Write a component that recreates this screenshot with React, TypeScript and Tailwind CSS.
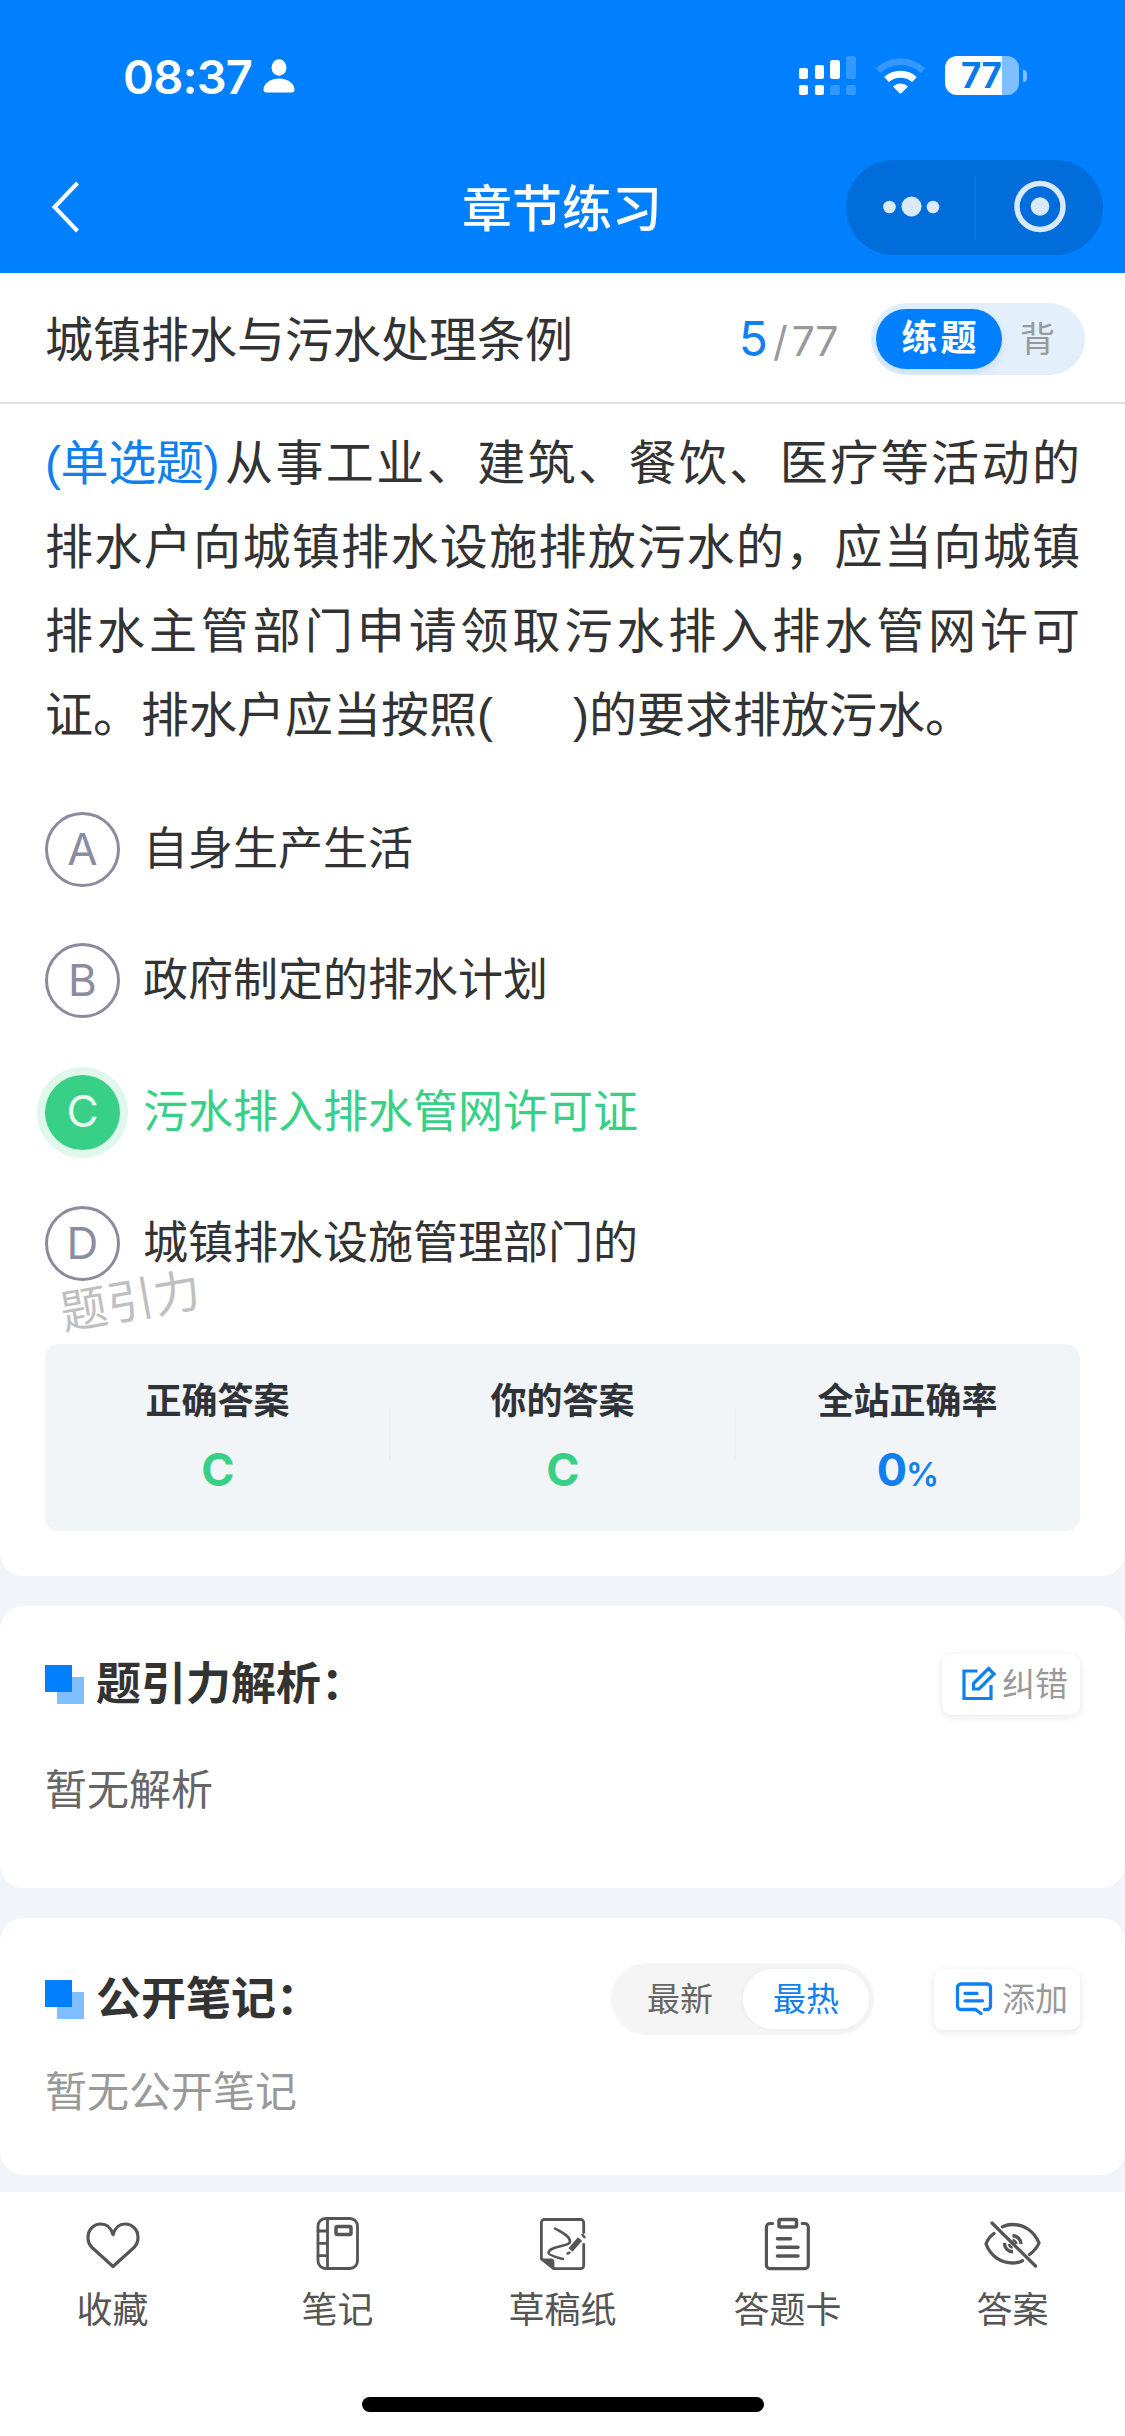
import type { ReactNode } from "react";

const options = [
  { key: "A", text: "自身生产生活", correct: false },
  { key: "B", text: "政府制定的排水计划", correct: false },
  { key: "C", text: "污水排入排水管网许可证", correct: true },
  { key: "D", text: "城镇排水设施管理部门的", correct: false },
];

function StatusBar() {
  return (
    <div className="flex h-[152px] items-start justify-between pl-[123px] pr-[98px] text-white">
      <div className="mt-[48px] flex h-[56px] items-center">
        <span className="font-['Inter'] text-[47px] font-semibold leading-none tracking-[-0.8px]">08:37</span>
        <svg className="ml-[11px]" width="32" height="34" viewBox="0 0 32 34" fill="currentColor">
          <ellipse cx="16" cy="8.5" rx="7.5" ry="8.2" />
          <path d="M16 19.5c9 0 15.5 5.500 15.500 11 0 2-1 3-3 3h-25c-2 0-3-1-3-3 0-5.500 6.500-11 15.500-11z" />
        </svg>
      </div>
      <div className="mt-[56px] flex items-start">
        <svg width="58" height="40" viewBox="0 0 58 40" fill="currentColor">
          <rect x="0" y="12" width="9" height="11" rx="2" />
          <rect x="16" y="9" width="9" height="14" rx="2" />
          <rect x="31" y="4" width="10" height="19" rx="2.500" />
          <rect x="47" y="0" width="10" height="23" rx="2.500" opacity="0.2" />
          <rect x="0" y="29" width="9" height="10" rx="2" />
          <rect x="16" y="29" width="9" height="10" rx="2" />
          <rect x="31" y="29" width="10" height="10" rx="2.500" opacity="0.2" />
          <rect x="47" y="29" width="10" height="10" rx="2.500" opacity="0.2" />
        </svg>
        <svg className="ml-[18px]" width="52" height="40" viewBox="0 0 52 40" fill="none">
          <path d="M3 14.500a33 33 0 0 1 45 0" stroke="white" strokeWidth="6.500" opacity="0.2" />
          <path d="M11.500 23.500a21 21 0 0 1 28 0" stroke="white" strokeWidth="7" />
          <path d="M18 30.500a11 11 0 0 1 15 0l-6.200 6.300a2 2 0 0 1-2.700 0z" fill="white" />
        </svg>
        <div className="ml-[18px] flex items-center">
          <div className="flex h-[39px] w-[74px] items-center overflow-hidden rounded-[12px] bg-[linear-gradient(90deg,#fff_57px,#80bfff_57px)] pl-[16px]">
            <span className="font-['Inter'] text-[35px] font-bold leading-none tracking-[-0.6px] text-[#0a7ae8]">77</span>
          </div>
          <div className="ml-[4px] h-[12px] w-[4px] rounded-r-full bg-[#80bfff]" />
        </div>
      </div>
    </div>
  );
}

function NavBar() {
  return (
    <div className="flex h-[121px] items-start text-white">
      <div className="w-[460px] pl-[50px] pt-[28px]">
        <svg width="32" height="54" viewBox="0 0 32 54" fill="none" stroke="currentColor" strokeWidth="4">
          <path d="M27.500 3 4.500 27l23 24" />
        </svg>
      </div>
      <h1 className="w-[204px] whitespace-nowrap pt-[18px] text-center text-[50px] font-medium leading-[80px]">章节练习</h1>
      <div className="ml-[182px] mt-[8px] flex h-[95px] w-[257px] items-center rounded-full bg-[#006ddb] text-[#d9e9fa]">
        <svg width="257" height="95" viewBox="0 0 257 95" fill="currentColor">
          <circle cx="43.500" cy="47" r="6.300" />
          <circle cx="65.500" cy="46.500" r="10" />
          <circle cx="87" cy="47" r="6.300" />
          <path d="M129 16v64" stroke="#1077e0" strokeWidth="1.500" />
          <circle cx="194" cy="46.500" r="23" fill="none" stroke="currentColor" strokeWidth="5.500" />
          <circle cx="194" cy="46.500" r="9.300" />
        </svg>
      </div>
    </div>
  );
}

function ChapterBar() {
  return (
    <div className="flex h-[131px] items-start justify-between border-b-2 border-[#dfdfdf] bg-white pl-[45px] pr-[40px]">
      <h2 className="mt-[28px] text-[48px] leading-[80px] text-[#333]">城镇排水与污水处理条例</h2>
      <div className="flex">
        <div className="mt-[26px] flex items-baseline font-['Inter'] text-[41px] leading-[80px] text-[#999]">
          <span className="text-[48px] text-[#0f80ee]">5</span>
          <span className="ml-[5px]">/</span>
          <span className="ml-[4px] tracking-[-0.5px]">77</span>
        </div>
        <div className="ml-[33px] mt-[30px] flex h-[72px] w-[214px] items-center rounded-full bg-[#e3f0fc] pl-[5px]">
          <div className="flex h-[60px] w-[126px] items-center justify-center rounded-full bg-[#0080ff] pl-[3px] text-[36px] font-bold tracking-[3px] text-white shadow-[0_3px_8px_rgba(0,70,140,0.12)]">
            练题
          </div>
          <span className="ml-[18px] text-[35px] leading-none text-[#999]">背</span>
        </div>
      </div>
    </div>
  );
}

function Question() {
  return (
    <div className="mt-[17px] px-[45px] text-[48px] leading-[84px] text-[#333]">
      <div className="flex whitespace-nowrap">
        <span className="mr-[6px] tracking-[-0.4px] text-[#0f80ee]">(单选题)</span>
        <span className="flex-1 [text-align-last:justify]">从事工业、建筑、餐饮、医疗等活动的</span>
      </div>
      <p className="whitespace-nowrap [text-align-last:justify]">排水户向城镇排水设施排放污水的，应当向城镇</p>
      <p className="whitespace-nowrap [text-align-last:justify]">排水主管部门申请领取污水排入排水管网许可</p>
      <p className="whitespace-nowrap">
        证。排水户应当按照(<span className="inline-block w-[80px]" />)的要求排放污水。
      </p>
    </div>
  );
}

function Options() {
  return (
    <ul className="mt-[54px] flex flex-col gap-[56.4px] px-[45px]">
      {options.map((o) => (
        <li key={o.key} className="flex h-[75px] items-center">
          <span
            className={`flex h-[75px] w-[75px] items-center justify-center rounded-full pb-[2px] font-['Inter'] text-[44px] leading-none ${
              o.correct
                ? "bg-[#38d086] text-[#e6faf0] shadow-[0_0_0_8px_#e0f7ec]"
                : "border-[3px] border-[#8c8a9c] text-[#8c8ca0]"
            }`}
          >
            {o.key}
          </span>
          <span className={`ml-[23px] text-[45px] leading-[75px] ${o.correct ? "text-[#38d086]" : "text-[#333]"}`}>
            {o.text}
          </span>
        </li>
      ))}
    </ul>
  );
}

function Result() {
  return (
    <div className="mx-[45px] mt-[63px] flex h-[187px] items-start rounded-[14px] bg-[#f2f5f8] pt-[64px]">
      <ResultColumn label="正确答案">
        <span className="text-[#38d086]">C</span>
      </ResultColumn>
      <div className="-mx-px h-[52px] w-[2px] bg-[#edf0f3]" />
      <ResultColumn label="你的答案">
        <span className="text-[#38d086]">C</span>
      </ResultColumn>
      <div className="-mx-px h-[52px] w-[2px] bg-[#edf0f3]" />
      <ResultColumn label="全站正确率">
        <span className="text-[#0f80ee]">0</span>
        <span className="text-[33px] font-semibold text-[#0f80ee]">%</span>
      </ResultColumn>
    </div>
  );
}

function ResultColumn({ label, children }: { label: string; children: ReactNode }) {
  return (
    <div className="-mt-[34px] flex-1 text-center">
      <div className="text-[36px] font-bold leading-[56px] text-[#2f3337]">{label}</div>
      <div className="mt-[10px] font-['Inter'] text-[45px] font-bold leading-[60px] tracking-[-1px]">{children}</div>
    </div>
  );
}

function SectionTitle({ children }: { children: ReactNode }) {
  return (
    <div className="flex items-center">
      <svg width="39" height="39" viewBox="0 0 39 39">
        <rect x="12" y="12" width="27" height="27" fill="#80bfff" />
        <rect width="27" height="27" fill="#0080ff" />
      </svg>
      <h3 className="ml-[12px] pt-[2px] text-[45px] font-bold leading-[58px] text-[#333]">{children}</h3>
    </div>
  );
}

function EditIcon() {
  return (
    <svg width="36" height="36" viewBox="0 0 36 36" fill="none" stroke="#0f80ee" strokeWidth="3.200">
      <path d="M16.500 5H3v27.500h27V19" />
      <path d="M27.500 2.500 33 8 18 23h-5.500v-5.500z" />
    </svg>
  );
}

function NoteIcon() {
  return (
    <svg width="38" height="36" viewBox="0 0 38 36" fill="none" stroke="#0f80ee" strokeWidth="3.300" strokeLinecap="round">
      <path d="m26 32.500-5.500-4H6A3.500 3.500 0 0 1 2.500 25V6.500A3.500 3.500 0 0 1 6 3h26a3.500 3.500 0 0 1 3.500 3.500V25a3.500 3.500 0 0 1-3.500 3.500h-2.500" />
      <path d="M10 12.300h12M10 19.800h17.500" />
    </svg>
  );
}

function Analysis() {
  return (
    <section className="mt-[30px] h-[282px] rounded-[24px] bg-white px-[45px] pt-[48px]">
      <div className="flex h-[60px] items-center justify-between">
        <SectionTitle>题引力解析：</SectionTitle>
        <button className="flex h-[61px] w-[138px] items-center rounded-[10px] bg-white pl-[19px] text-[33px] text-[#999] shadow-[0_2px_9px_rgba(0,0,0,0.1)]">
          <EditIcon />
          <span className="ml-[5px] whitespace-nowrap leading-none">纠错</span>
        </button>
      </div>
      <p className="mt-[45px] text-[42px] leading-[64px] text-[#666]">暂无解析</p>
    </section>
  );
}

function PublicNotes() {
  return (
    <section className="mt-[30px] h-[257px] rounded-[24px] bg-white px-[45px] pt-[45px]">
      <div className="flex h-[72px] items-center justify-between">
        <SectionTitle>公开笔记：</SectionTitle>
        <div className="flex items-center">
          <div className="flex h-[72px] w-[263px] items-center rounded-full bg-[#f5f5f5] pl-[6px] text-[33px] leading-none">
            <span className="flex h-[60px] w-[126px] items-center justify-center text-[#666]">最新</span>
            <span className="flex h-[60px] w-[126px] items-center justify-center rounded-full bg-white text-[#0f80ee] shadow-[0_0_6px_rgba(0,0,0,0.04)]">
              最热
            </span>
          </div>
          <button className="ml-[60px] flex h-[61px] w-[146px] items-center rounded-[10px] bg-white pl-[21px] text-[33px] text-[#999] shadow-[0_2px_9px_rgba(0,0,0,0.1)]">
            <NoteIcon />
            <span className="ml-[9px] whitespace-nowrap leading-none">添加</span>
          </button>
        </div>
      </div>
      <p className="mt-[26px] text-[42px] leading-[64px] text-[#999]">暂无公开笔记</p>
    </section>
  );
}

const tabs = [
  {
    label: "收藏",
    icon: (
      <path
        strokeWidth="3.200"
        d="M30 21.500C28 15 23.500 11 18 11 10.500 11 5 17 5 24.500c0 4 1.500 7.500 4 10l21 19 21-19c2.500-2.500 4-6 4-10C55 17 49.500 11 42 11c-5.500 0-10 4-12 10.500z"
      />
    ),
  },
  {
    label: "笔记",
    icon: (
      <>
        <rect x="10" y="5.500" width="39.500" height="50" rx="7.500" />
        <path d="M19.500 5.500v50M10 18h9.500M10 30.300h9.500M10 42.700h9.500" />
        <rect x="28" y="13.500" width="15" height="8" rx="1.500" strokeWidth="3.500" />
      </>
    ),
  },
  {
    label: "草稿纸",
    icon: (
      <>
        <path d="M50.700 19.500V9.500a3 3 0 0 0-3-3H11.400a3 3 0 0 0-3 3V46l12.300 9.700h27a3 3 0 0 0 3-3V31.500" />
        <path d="M8.400 46h10a2.500 2.500 0 0 1 2.500 2.500v7.200z" fill="currentColor" strokeWidth="1" />
        <path d="M22 15.500c7 4 15 7.500 15 13 0 5.500-21.500 4-21.500 11.500 0 2 7 4 14.500 6" strokeWidth="2.500" />
        <path d="m37.500 37 9.500-11" strokeWidth="5.500" strokeLinecap="butt" />
        <path d="m49.500 21.800 2 2.400M34.500 40.500l2-.8" strokeWidth="2.500" />
      </>
    ),
  },
  {
    label: "答题卡",
    icon: (
      <>
        <path strokeWidth="3.200" d="M14.500 10.500h-2.600a3.500 3.500 0 0 0-3.500 3.500v38.200a3.500 3.500 0 0 0 3.500 3.500h34.900a3.500 3.500 0 0 0 3.500-3.500V14a3.500 3.500 0 0 0-3.500-3.500h-2.600" />
        <rect x="21" y="6.500" width="17.500" height="7.500" rx="1.500" strokeWidth="3.500" />
        <path strokeWidth="3.500" d="M19.500 25.700h13M19.500 34.300H40M19.500 43H40" />
      </>
    ),
  },
  {
    label: "答案",
    icon: (
      <>
        <path strokeWidth="3.300" d="m9 10 43.500 43" />
        <path strokeWidth="3.300" d="M19.500 13.800c3-1.400 6.500-2.300 10-2.300C41 11.500 51 18 56 30c-2 5-5.500 8.500-9.500 11.500M11 20.500C7.500 23 4.500 26.500 3 31c5 12.500 15 19 26.500 19 3.500 0 7-.8 10-2.300" />
        <path strokeWidth="3.500" strokeLinecap="butt" d="M29.500 22.800c5 0 8.500 3.700 8.500 8.200M21.500 30c0 5 3.500 8.500 8.500 8.700" />
        <path strokeWidth="2.500" strokeLinecap="butt" d="M29.500 27c2 .5 3.500 2 4 4M26 31c.3 1.800 1.500 3.200 3.500 3.700" />
      </>
    ),
  },
];

function TabBar() {
  return (
    <nav className="mt-[17px] h-[244px] bg-white pt-[21px] text-[#555]">
      <div className="flex">
        {tabs.map((t) => (
          <div key={t.label} className="flex w-[225px] flex-col items-center">
            <svg
              width="60"
              height="60"
              viewBox="0 0 60 60"
              fill="none"
              stroke="currentColor"
              strokeWidth="2.800"
              strokeLinecap="round"
              strokeLinejoin="round"
            >
              {t.icon}
            </svg>
            <span className="mt-[13px] text-[36px] leading-[50px]">{t.label}</span>
          </div>
        ))}
      </div>
      <div className="mx-auto mt-[61px] h-[15px] w-[402px] rounded-full bg-black" />
    </nav>
  );
}

export default function App() {
  return (
    <div className="h-[2436px] w-[1125px] overflow-hidden bg-[#f1f5f9] font-['Liberation_Sans','Noto_Sans_CJK_SC',sans-serif]">
      <header className="bg-[#0080ff]">
        <StatusBar />
        <NavBar />
      </header>
      <main>
        <ChapterBar />
        <section className="relative h-[1172px] overflow-hidden rounded-b-[24px] bg-white pt-px">
          <Question />
          <Options />
          <Result />
          {/* brand watermark */}
          <span className="pointer-events-none absolute left-[60px] top-[868px] -rotate-10 text-[47px] leading-[60px] text-[#bfbfbf]">
            题引力
          </span>
        </section>
        <Analysis />
        <PublicNotes />
      </main>
      <TabBar />
    </div>
  );
}
